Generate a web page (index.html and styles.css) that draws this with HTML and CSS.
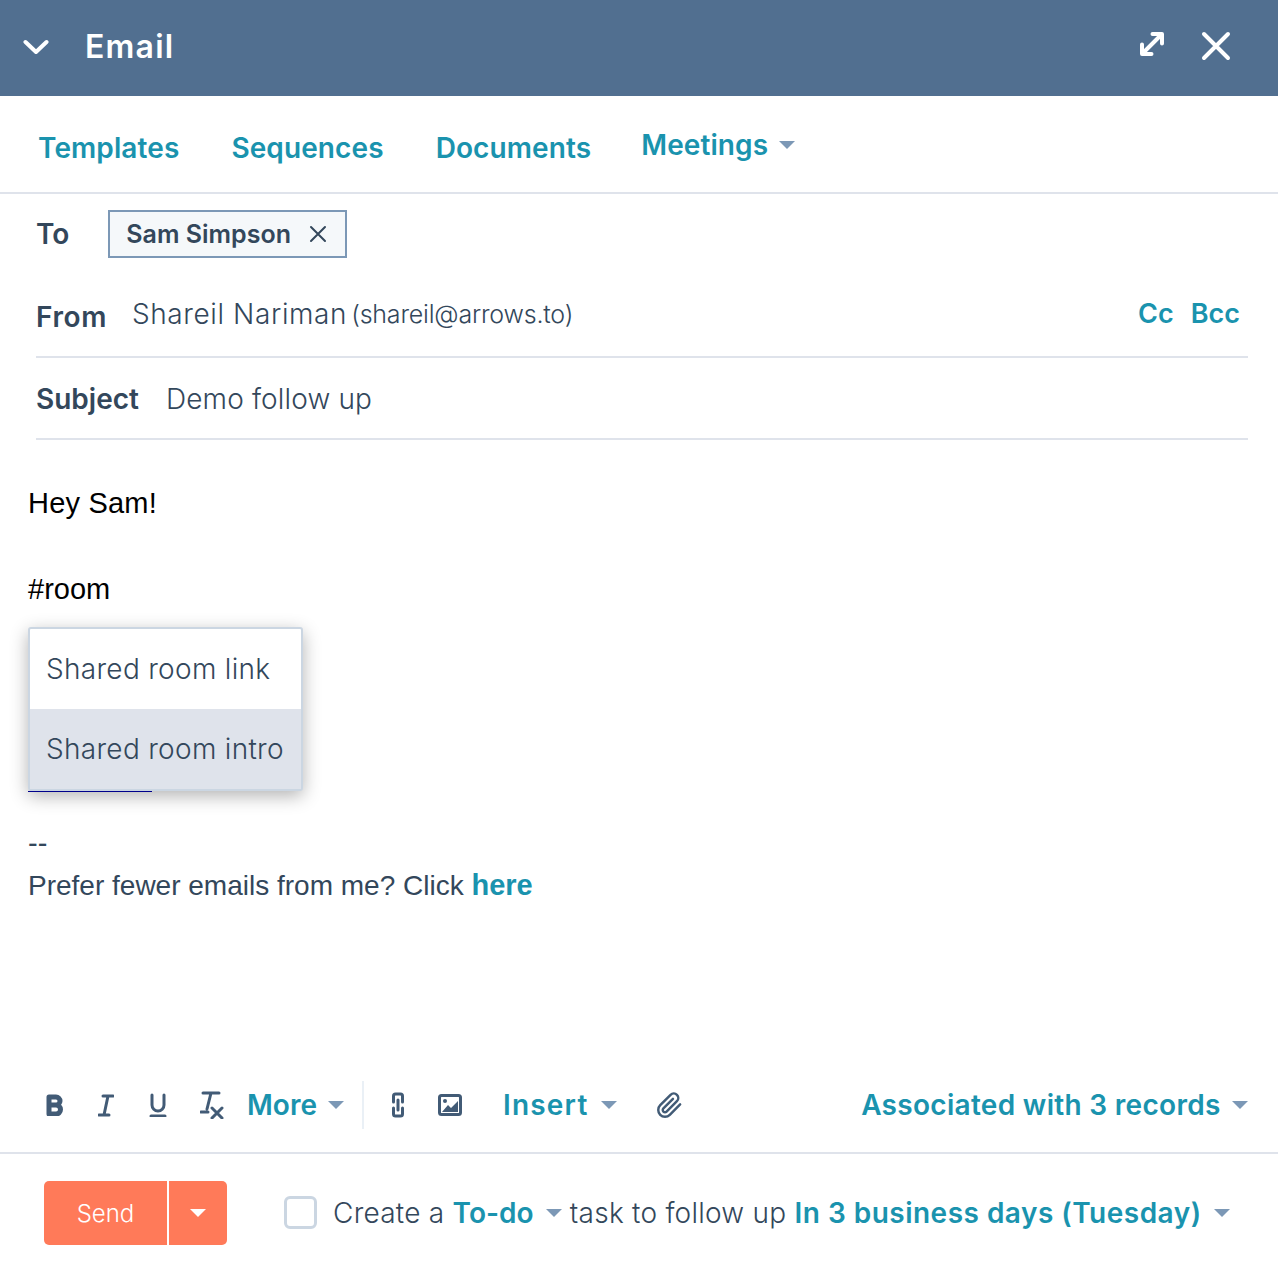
FILE: index.html
```html
<!DOCTYPE html>
<html lang="en">
<head>
  <meta charset="UTF-8">
  <title>Email</title>
  <link rel="stylesheet" href="styles.css">
</head>
<body>
<div id="panel">
  <div class="head">
    <svg class="head-chevron" width="26" height="16" viewBox="0 0 26 16"><path d="M2.5 3 L13 13 L23.5 3" /></svg>
    <div class="head-title">Email</div>
    <svg class="head-expand" width="28" height="28" viewBox="0 0 28 28"><path d="M5 23 L23 5 M14.5 4 H24 V13.5 M4 14.5 V24 H13.5" /></svg>
    <svg class="head-close" width="30" height="30" viewBox="0 0 30 30"><path d="M3 3 L27 27 M27 3 L3 27" /></svg>
  </div>

  <ul class="tabs">
    <li>Templates</li>
    <li>Sequences</li>
    <li>Documents</li>
    <li class="tab-menu">Meetings <span class="caret"></span></li>
  </ul>

  <div class="to-row">
    <span class="label">To</span>
    <span class="tag">Sam Simpson
      <svg width="18" height="18" viewBox="0 0 18 18"><path d="M2 2 L16 16 M16 2 L2 16" /></svg>
    </span>
  </div>

  <div class="from-row">
    <span class="label from-label">From</span>
    <span class="from-name">Shareil Nariman</span>
    <span class="from-mail">(shareil@arrows.to)</span>
    <span class="cc">Cc</span>
    <span class="cc">Bcc</span>
  </div>

  <div class="subject-row">
    <span class="label">Subject</span>
    <span class="subject">Demo follow up</span>
  </div>

  <div class="body">
    <p class="greet">Hey Sam!</p>
    <p class="tag-input">#room</p>
    <div class="suggest">
      <div class="suggest-item">Shared room link</div>
      <div class="suggest-item current">Shared room intro</div>
    </div>
    <div class="suggest-line"></div>
    <p class="dashes">--</p>
    <p class="unsub">Prefer fewer emails from me? Click <a>here</a></p>
  </div>

  <div class="toolbar">
    <svg class="tool" width="18" height="22" viewBox="0 0 18 22"><path class="thick" d="M3 3 H10 A4 4 0 0 1 10 11 H3 M10 11 A4.5 4.5 0 0 1 10 20 H3 V3" /></svg>
    <svg class="tool tool-i" width="16" height="24" viewBox="0 0 16 24"><path d="M5 3 H15 M1 22 H11 M10 3 L6 22" /></svg>
    <svg class="tool tool-u" width="18" height="24" viewBox="0 0 18 24"><path d="M3 2 V12 A6 6 0 0 0 15 12 V2 M2 23 H16" /></svg>
    <svg class="tool tool-t" width="24" height="28" viewBox="0 0 24 28"><path d="M3 2 H19 M11 2 L7 18 M1 21 H8 M12 17 L22 27 M22 17 L12 27" /></svg>
    <span class="tool-menu more">More <span class="caret"></span></span>
    <span class="tool-sep"></span>
    <svg class="tool tool-link" width="14" height="26" viewBox="0 0 14 26"><path d="M2.5 10 V4 Q2.5 2 4.5 2 H9.5 Q11.5 2 11.5 4 V10 M2.5 16 V22 Q2.5 24 4.5 24 H9.5 Q11.5 24 11.5 22 V16 M7 8 V18" /></svg>
    <svg class="tool tool-img" width="24" height="22" viewBox="0 0 24 22"><rect x="1.5" y="1.5" width="21" height="19" rx="2" /><path class="fill" d="M4 18 L10 11 L13 14 L20 7 V18 Z" /><circle class="fill" cx="7" cy="7" r="2" /></svg>
    <span class="tool-menu insert">Insert <span class="caret"></span></span>
    <svg class="tool tool-clip" width="27" height="29" viewBox="0 0 24 24"><path d="M21.44 11.05l-9.19 9.19a6 6 0 0 1-8.49-8.49l9.19-9.19a4 4 0 0 1 5.66 5.66l-9.2 9.19a2 2 0 0 1-2.83-2.83l8.49-8.48" /></svg>
    <span class="tool-menu assoc">Associated with 3 records <span class="caret"></span></span>
  </div>

  <div class="foot">
    <div class="send">
      <span class="send-main">Send</span>
      <span class="send-more"><span class="caret caret-white"></span></span>
    </div>
    <span class="check"></span>
    <span class="foot-text">Create a <a class="todo">To-do</a> <span class="caret"></span> task to follow up <a>In 3 business days (Tuesday)</a> <span class="caret"></span></span>
  </div>
</div>
</body>
</html>
```

FILE: styles.css
```css
body, div, ul, li, p {
  margin: 0;
  padding: 0;
}

ul {
  list-style-type: none;
}

body {
  background: #fff;
  color: #33475b;
  font: 300 28px/40px Inter, "Open Sans", sans-serif;
}

#panel {
  width: 1278px;
  height: 1262px;
  display: flex;
  flex-direction: column;
  overflow: hidden;
}

svg path, svg rect {
  fill: none;
  stroke-linecap: round;
  stroke-linejoin: round;
}

.head {
  height: 96px;
  box-sizing: border-box;
  background: #516f90;
  display: flex;
  align-items: center;
  padding: 0 47px 2px 23px;
  color: #fff;
  flex: none;
}

.head svg path {
  stroke: #fff;
  stroke-width: 4;
}

.head-title {
  margin-left: 36px;
  font-size: 32px;
  font-weight: 600;
  letter-spacing: 1.2px;
  flex: 1;
}

.head-expand {
  margin-right: 35px;
  margin-bottom: 6px;
}

.head-close {
  margin-bottom: 2px;
}

.tabs {
  border-bottom: 2px solid #dfe3eb;
  display: flex;
  align-items: center;
  padding: 8px 0 0 38px;
  height: 88px;
  gap: 52px;
  color: #1a93ae;
  font-size: 28px;
  font-weight: 600;
  flex: none;
}

.tabs li {
  letter-spacing: .1px;
}

.tab-menu {
  margin-top: -6px;
  margin-left: -2px;
}

.caret {
  display: inline-block;
  width: 0;
  height: 0;
  border-left: 8px solid transparent;
  border-right: 8px solid transparent;
  border-top: 8px solid #7c98b6;
  vertical-align: middle;
  margin: 0 0 4px 4px;
}

.caret-white {
  border-top-color: #fff;
  margin: 0;
}

.label {
  font-weight: 600;
  color: #33475b;
}

.to-row {
  height: 82px;
  display: flex;
  align-items: center;
  padding: 0 0 2px 36px;
  box-sizing: border-box;
  flex: none;
}

.tag {
  margin: 0 0 0 39px;
  height: 48px;
  box-sizing: border-box;
  padding: 0 18px 0 16px;
  border: 2px solid #7c98b6;
  background: #f5f8fa;
  display: flex;
  align-items: center;
  gap: 18px;
  font-size: 25px;
  font-weight: 600;
}

.tag svg path {
  stroke: #33475b;
  stroke-width: 2;
}

.from-row {
  height: 82px;
  margin: 0 30px 0 36px;
  border-bottom: 2px solid #dfe3eb;
  display: flex;
  align-items: center;
  flex: none;
  padding-bottom: 4px;
  box-sizing: border-box;
}

.from-label {
  position: relative;
  top: 3px;
  letter-spacing: .6px;
}

.from-name {
  margin-left: 25px;
  letter-spacing: .6px;
}

.from-mail {
  margin-left: 4px;
  font-size: 25px;
  letter-spacing: -.2px;
  flex: 1;
}

.cc {
  margin: 0 8px 0 9px;
  color: #1a93ae;
  font-size: 27px;
  font-weight: 600;
}

.subject-row {
  height: 82px;
  margin: 0 30px 0 36px;
  padding-top: 2px;
  border-bottom: 2px solid #dfe3eb;
  display: flex;
  align-items: center;
  gap: 27px;
  flex: none;
  box-sizing: border-box;
}

.subject {
  letter-spacing: .15px;
}

.body {
  position: relative;
  height: 632px;
  padding: 42px 0 0 28px;
  box-sizing: border-box;
  font: 29px/43px "Liberation Sans", Arial, sans-serif;
  color: #000;
  flex: none;
}

.greet {
  letter-spacing: .2px;
}

.tag-input {
  margin-top: 43px;
}

.suggest-line {
  position: absolute;
  left: 28px;
  top: 351px;
  width: 124px;
  height: 1px;
  background: #00008b;
}

.suggest {
  position: absolute;
  left: 28px;
  top: 187px;
  width: 271px;
  border: 2px solid #cbd6e2;
  background: #fff;
  border-radius: 3px;
  box-shadow: 0 5px 18px rgba(0, 0, 0, .3);
  font: 300 28px/40px Inter, "Open Sans", sans-serif;
  letter-spacing: .3px;
  color: #33475b;
}

.suggest-item {
  height: 80px;
  padding: 20px 0 0 16px;
  box-sizing: border-box;
}

.suggest-item.current {
  background: #dfe3eb;
}

.dashes {
  margin-top: 211px;
  color: #33475b;
}

.unsub {
  margin-top: -1px;
  color: #33475b;
  font-size: 28px;
}

.unsub a {
  color: #1a93ae;
  font-weight: 700;
  font-size: 29px;
}

.toolbar {
  height: 82px;
  box-sizing: border-box;
  display: flex;
  align-items: center;
  padding: 0 30px 14px 46px;
  border-bottom: 2px solid #dfe3eb;
  flex: none;
}

.tool path, .tool rect {
  stroke: #425b76;
  stroke-width: 3;
}

.tool .fill, .tool circle {
  fill: #425b76;
  stroke: none;
}

.tool path.thick {
  stroke-width: 5;
}

.tool-i { margin-left: 34px; }
.tool-u { margin-left: 35px; }
.tool-t { margin-left: 33px; }
.tool-link { margin-left: 27px; }
.tool-img { margin-left: 33px; }
.tool-clip { margin-left: 39px; }

.tool-clip path {
  stroke-width: 2.2;
}

.tool-menu {
  color: #1a93ae;
  font-weight: 600;
  font-size: 28px;
}

.more { margin-left: 23px; }
.insert { margin-left: 41px; letter-spacing: 1.2px; }
.assoc { margin-left: auto; letter-spacing: .3px; }

.tool-sep {
  width: 2px;
  height: 48px;
  background: #eaf0f6;
  margin-left: 18px;
}

.foot {
  flex: 1;
  display: flex;
  align-items: flex-start;
  padding: 27px 0 0 44px;
}

.send {
  width: 183px;
  height: 64px;
  background: #ff7a59;
  border-radius: 5px;
  display: flex;
  color: #fff;
}

.send-main {
  width: 123px;
  border-right: 2px solid #fff;
  text-align: center;
  line-height: 66px;
  font-size: 24px;
}

.send-more {
  flex: 1;
  display: flex;
  align-items: center;
  justify-content: center;
}

.check {
  width: 33px;
  height: 33px;
  border: 3px solid #cbd6e2;
  background: #fff;
  border-radius: 6px;
  box-sizing: border-box;
  margin: 15px 16px 0 57px;
}

.foot-text {
  margin-top: 12px;
  letter-spacing: .25px;
}

.foot-text a {
  color: #1a93ae;
  font-weight: 600;
  letter-spacing: .48px;
}

.foot-text .todo {
  letter-spacing: 0;
}
```
